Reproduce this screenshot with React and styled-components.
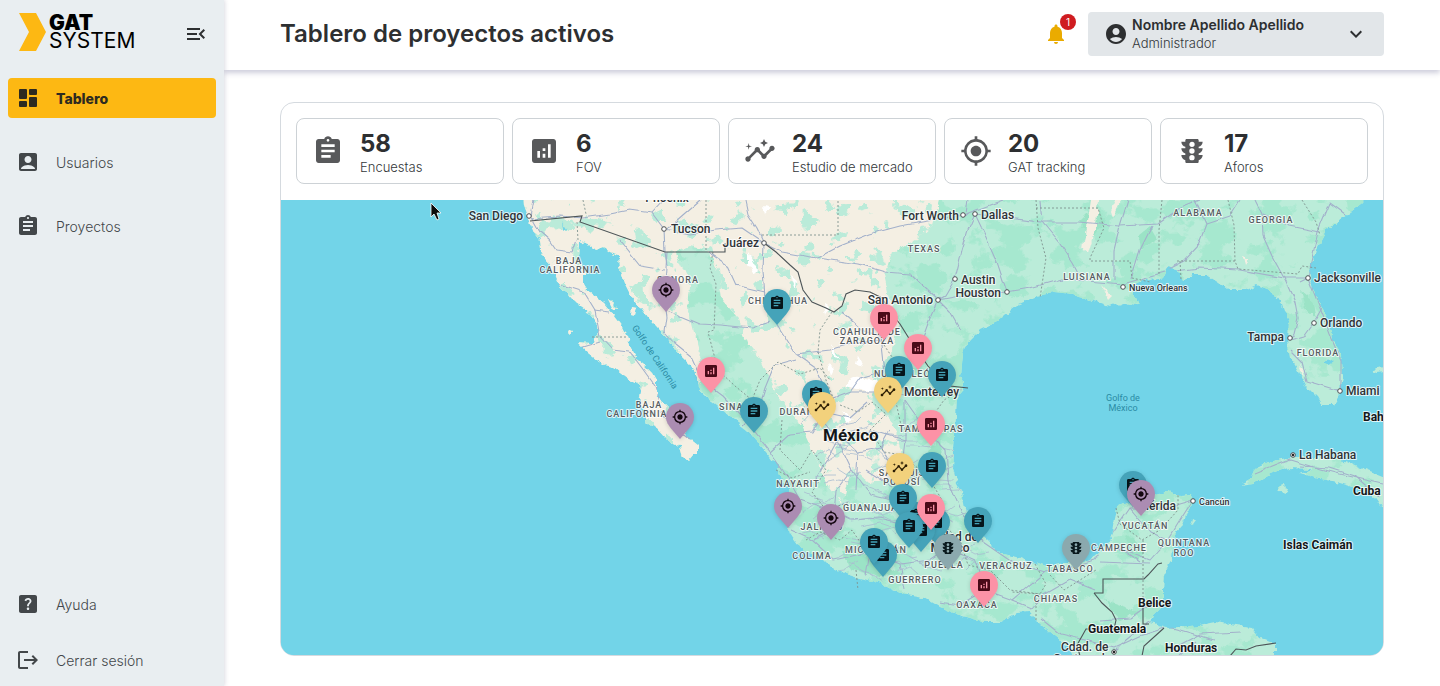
import React from 'react';
import styled, { createGlobalStyle } from 'styled-components';
import {
  MdAccountBox,
  MdAccountCircle,
  MdAnalytics,
  MdAssignment,
  MdExpandMore,
  MdHelpCenter,
  MdInsights,
  MdLogout,
  MdMenuOpen,
  MdMyLocation,
  MdNotifications,
  MdTraffic,
} from 'react-icons/md';

const DashboardIcon = () => (
  <svg viewBox='0 0 24 24' fill='currentColor' aria-hidden='true'>
    <rect x='3' y='3' width='8' height='10' rx='1' />
    <rect x='13' y='3' width='8' height='6' rx='1' />
    <rect x='3' y='15' width='8' height='6' rx='1' />
    <rect x='13' y='11' width='8' height='10' rx='1' />
  </svg>
);

const mainLinks = [
  { name: 'Tablero', icon: DashboardIcon, active: true },
  { name: 'Usuarios', icon: MdAccountBox },
  { name: 'Proyectos', icon: MdAssignment },
];

const footerLinks = [
  { name: 'Ayuda', icon: MdHelpCenter },
  { name: 'Cerrar sesión', icon: MdLogout },
];

const stats = [
  { value: 58, name: 'Encuestas', icon: MdAssignment },
  { value: 6, name: 'FOV', icon: MdAnalytics },
  { value: 24, name: 'Estudio de mercado', icon: MdInsights },
  { value: 20, name: 'GAT tracking', icon: MdMyLocation },
  { value: 17, name: 'Aforos', icon: MdTraffic },
];

const pinKinds = {
  survey: { label: 'Encuestas', color: '#45a3b9', ink: '#06141a', icon: MdAssignment },
  fov: { label: 'FOV', color: '#fc92a6', ink: '#4a0a18', icon: MdAnalytics },
  market: { label: 'Estudio de mercado', color: '#f2d17c', ink: '#2a1c04', icon: MdInsights },
  tracking: { label: 'GAT tracking', color: '#ab8cb2', ink: '#14060f', icon: MdMyLocation },
  traffic: { label: 'Aforos', color: '#8ba9ae', ink: '#0a1a1e', icon: MdTraffic },
};

// Map window, in map units
const view = { x: 281, y: 200, w: 1102, h: 455 };

const pins = [
  ['tracking', 666, 290], ['survey', 777, 303], ['fov', 884, 318], ['fov', 918, 348],
  ['survey', 899, 370], ['survey', 942, 375], ['fov', 711, 371], ['market', 888, 391],
  ['survey', 816, 394], ['market', 822, 406], ['survey', 754, 411], ['tracking', 680, 417],
  ['fov', 931, 424], ['market', 900, 467], ['survey', 932, 466], ['survey', 916, 516],
  ['survey', 903, 498], ['survey', 936, 522], ['survey', 921, 530], ['survey', 909, 526],
  ['fov', 931, 508], ['survey', 978, 521], ['traffic', 948, 548], ['survey', 883, 555],
  ['survey', 874, 542], ['fov', 984, 585], ['tracking', 788, 506], ['tracking', 831, 518],
  ['traffic', 1076, 548], ['survey', 1133, 485], ['tracking', 1141, 494],
];

const land = [
  'M523 190 L524 205 528 216 530 222 534 232 540 240 541 250 548 262 552 268 557 280 560 288 568 294 575 302 584 308 592 317 597 324 598 334 595 343 588 343 577 342 582 347 588 353 597 360 605 365 613 367 620 373 628 379 638 385 642 393 640 403 645 413 645 423 657 428 670 442 680 447 683 457 688 461 693 455 698 455 698 445 693 441 687 436 680 420 668 407 661 400 657 393 657 380 653 373 645 365 635 357 630 347 627 337 622 327 613 315 603 303 590 293 584 283 584 272 578 258 579 240 590 245 595 250 603 247 610 252 618 255 619 267 625 283 632 297 640 307 647 317 657 328 667 338 673 342 675 350 683 358 693 368 698 377 699 390 707 397 717 405 730 417 747 430 760 445 770 457 778 468 782 483 790 488 791 497 781 500 782 510 787 523 790 533 803 550 823 560 830 567 843 573 855 577 880 583 900 593 923 597 940 607 960 615 984 622 1000 622 1017 613 1030 612 1038 622 1053 635 1067 647 1072 655 1072 670 1275 670 1275 643 1260 637 1252 627 1230 624 1215 622 1200 625 1180 627 1167 628 1150 623 1153 617 1163 607 1163 590 1164 577 1167 568 1172 560 1173 547 1175 535 1182 527 1187 513 1193 500 1192 494 1180 495 1167 491 1155 494 1133 503 1117 507 1115 520 1113 533 1108 545 1095 557 1077 563 1063 563 1047 567 1033 563 1020 558 1000 553 987 540 975 530 967 513 963 493 957 483 953 470 955 433 957 400 963 387 960 377 962 353 970 340 980 330 997 322 1017 305 1037 296 1053 293 1073 295 1097 302 1110 307 1127 302 1138 305 1133 293 1133 285 1143 280 1163 277 1167 268 1177 270 1182 280 1193 275 1207 275 1218 282 1228 290 1247 290 1257 285 1270 290 1282 305 1288 323 1287 340 1290 357 1298 370 1307 387 1318 398 1322 405 1333 405 1340 393 1343 377 1342 360 1333 337 1325 313 1313 290 1310 270 1317 247 1325 232 1343 218 1362 203 1364 190Z',
  'M1240 485 L1250 480 1253 470 1267 463 1290 457 1313 457 1343 460 1360 468 1390 480 1390 510 1380 506 1370 492 1350 486 1333 481 1320 479 1300 473 1312 469 1287 468 1267 475 1253 483Z',
  'M1279 486 L1284 484 1288 488 1286 493 1280 492Z',
  'M608 299 L612 301 617 309 613 309Z',
  'M632 307 L637 308 635 316 631 315Z',
  'M571 330 L574 331 571 336 569 334Z',
  'M1193 518 L1196 519 1191 526Z',
  'M1372 370 L1385 368 1385 372 1376 373Z',
];

const dry =
  'M500 190 L942 190 932 225 916 240 892 252 884 275 890 300 900 322 893 350 878 372 872 400 894 425 902 455 893 478 868 482 852 468 842 505 826 484 812 450 798 420 776 394 762 362 748 345 738 318 722 300 718 270 706 250 690 246 676 252 690 285 688 312 694 335 700 355 705 372 690 400 712 480 500 480Z';

const roads = [
  'M534 200 L531 216 540 232 549 240 556 250 572 252 576 240',
  'M531 218 L560 216 582 218 610 214 630 210 652 213 664 200 M652 213 L664 229 665 252 667 265 M700 200 L668 228',
  'M665 229 L690 234 716 230 742 228 764 243 M745 200 L748 214 757 228 764 243 782 252 817 258 840 246 870 234 900 226 963 215 1003 200',
  'M817 258 L858 264 885 272 910 274 938 300 945 296 955 279 962 250 968 230 975 214 1040 222 1080 222 1120 226 1158 224 1180 208 1200 200',
  'M975 214 L985 235 997 262 1007 292 1030 288 1062 279 1123 284 1165 272 1200 268 1240 270 1284 278 1308 278 1300 282',
  'M938 300 L960 296 1007 292 M938 300 L930 318 922 340 902 374 905 395 M938 300 L950 312 960 330',
  'M1040 200 L1042 222 1060 244 1072 262 1080 277 M1120 226 L1114 250 1114 279 M1128 200 L1120 226 M1152 226 L1140 250 1131 279',
  'M1195 200 L1206 224 1198 245 1184 260 1168 268 M1206 224 L1230 216 1240 200 M1255 200 L1262 214 1263 236 1272 256 1284 278 1295 302 1298 318 1294 334 1290 340 1304 336 1314 322 1322 308',
  'M1345 214 L1330 203 1318 232 1312 258 1308 278 1320 308 1330 334 1341 360 1341 382 1340 391 1307 381 1302 362 1290 350',
  'M1263 214 L1290 226 1320 232 M968 200 L966 215',
  'M764 243 L763 270 765 298 772 318 778 326 796 354 816 368 824 388 834 398 850 392 880 392 905 395 940 388 963 390',
  'M664 270 L640 266 620 241 M667 252 L664 300 666 318 664 332 676 345 692 358 703 382 722 396 745 420 770 452 786 475 800 500',
  'M667 310 L700 324 720 325 752 328 770 322 M735 285 L765 292 M708 252 L726 264 736 286',
  'M770 452 L790 434 812 432 824 412 M740 428 L758 410 765 388 774 366 796 360',
  'M559 284 L584 292 595 310 600 337 612 350 630 352 642 368 655 386 660 402 M594 310 L610 312 M600 342 L580 348 M660 412 L680 432 690 440',
  'M834 398 L822 420 838 440 852 470 870 495 892 500 920 520 944 540 M838 440 L870 430 905 440 905 400 M852 470 L836 490 834 512 800 500 M834 512 L850 520 880 518 920 528',
  'M905 440 L900 480 898 510 M905 400 L926 430 946 450 948 480 962 512 980 540 1012 562 1045 572 1076 566 1095 560 1115 530 1130 508 1165 508 1193 500',
  'M790 530 L812 540 831 530 M812 540 L834 560 870 552 900 564 930 560 948 548 975 560 984 590 1012 600 1045 572 M900 564 L905 590 M870 552 L866 576',
  'M984 590 L960 605 940 602 M1012 600 L1032 608 1042 596 1070 580 1095 590 M1040 618 L1060 634 1085 640 1114 648 1140 636 1165 628 M1100 620 L1130 618 1158 598',
  'M1119 548 L1150 560 1168 540 1184 514 1193 500 M1130 508 L1150 532 1168 540 M1119 548 L1140 562 M1100 562 L1150 564',
  'M1114 652 L1126 640 1148 622 1180 630 1215 640 M1170 650 L1200 634 1240 632 M1180 655 L1195 642',
  'M1255 474 L1290 460 1310 466 1340 474 1383 484 M1300 466 L1330 468 1355 476 1380 498',
  'M845 440 L858 452 880 448 896 470 M824 412 L850 418 868 402 M858 452 L856 490 M880 448 L890 430 M866 470 L892 486',
  'M815 480 L826 462 838 440 M880 372 L860 378 850 392 M796 354 L830 350 850 344 880 340 M842 312 L862 330 880 336 884 372',
];

// Generated web of secondary roads around the central states
const localRoads = Array.from({ length: 74 }, (_, i) => {
  const x = 800 + ((i * 47) % 176);
  const y = 424 + ((i * 29) % 152);
  return `M${x} ${y} l${8 + ((i * 7) % 13)} ${((i * 11) % 19) - 9} ${5 + ((i * 5) % 11)} ${((i * 13) % 17) - 8}`;
});

const stateLines = [
  'M583 200 L586 214 M577 222 L578 240 M592 337 L627 337',
  'M706 200 L706 252 M762 235 H838 V200 M713 252 L710 268 716 284 714 330 708 332 718 370 735 386 752 400 760 380 778 362 800 374 820 368 830 380',
  'M832 312 L820 330 818 352 826 380 834 400 820 420 828 440 M884 345 L894 360 886 390 896 402 902 430 930 420 944 400 958 392',
  'M840 405 L858 412 872 402 886 414 870 430 884 452 902 455 920 470 910 490 M782 420 L780 450 800 470 812 450 826 470 812 492 826 510 850 502',
  'M776 470 L792 478 810 472 M806 540 L820 532 840 540 852 530 862 545 900 548 M856 570 L858 590 M930 480 L942 500 938 520 960 540 968 565 990 570 1010 590 1040 594',
  'M1035 564 L1046 584 1040 594 1012 592 M1050 575 L1064 590 1096 570 M1036 594 L1036 620 M1116 508 L1120 524 1142 540 1160 530 1178 510 1178 494 M1143 540 L1143 600',
  'M1036 200 L1038 228 1046 258 1040 298 M1036 208 H1098 L1104 228 1090 258 1090 261 H1130 L1132 278 1150 282',
  'M1162 200 L1159 230 1159 276 M1177 261 H1235 L1238 269 1298 274 1302 266 1316 268 M1228 200 L1234 225 1235 261 M1180 261 L1181 279 M1302 200 L1316 222 1320 235',
];

const borders = [
  'M530 221 L582 216 580 222 665 252 H725 V243',
  'M764 243 L776 252 790 265 798 272 803 290 812 302 826 308 834 312 842 306 846 294 855 290 870 292 882 298 892 314 900 324 910 340 928 366 938 378 950 386 968 388',
  'M1094 593 H1103 V579 H1144 L1148 575 1158 564 1162 563 M1094 593 L1102 603 1112 612 1116 620 1114 629 H1086 L1077 645 1080 656',
  'M1143 602 V624 H1149 M1164 628 L1144 646 1142 656 M1230 656 L1236 649 1246 650 1256 646 1276 643',
];

const seedPatches = [
  ['#9be3c6', 'M1095 205 L1106 220 1090 240 1080 220Z M1140 250 L1158 240 1150 226 1138 236Z M1300 290 L1312 300 1316 318 1306 310Z'],
  ['#9be3c6', 'M842 552 L868 556 900 574 880 576 850 568Z M940 440 L946 470 938 480 928 450Z M1105 600 L1140 612 1120 620Z M1128 536 L1144 548 1138 562 1122 550Z'],
  ['#f4efe3', 'M1090 200 L1098 200 1096 226 1088 254 1083 250 1086 226Z M1114 200 H1120 L1112 218 1110 212Z'],
  ['#f4efe3', 'M1243 256 L1249 258 1245 264Z M1299 365 L1304 370 1303 376Z M1100 284 L1112 296 1108 300Z'],
  ['#ffffff', 'M748 252 L758 270 754 274 748 264Z M764 206 L770 208 766 216Z M791 275 L797 280 796 290Z M824 305 L829 308 826 316Z M832 344 L840 360 833 356Z M852 376 L876 380 890 394 868 392 846 386Z M842 410 L854 420 848 422Z M826 362 L834 368 830 376Z M858 356 L864 366 856 364Z'],
];

const regions = [
  ['BAJA', 569, 264], ['CALIFORNIA', 570, 273], ['SONORA', 678, 283], ['CHIHUAHUA', 778, 304],
  ['COAHUILA DE', 867, 335], ['ZARAGOZA', 867, 344], ['NUEVO LEÓN', 906, 377], ['BAJA', 649, 408],
  ['CALIFORNIA', 637, 417], ['SINALOA', 741, 410], ['DURANGO', 804, 415], ['TAMAULIPAS', 931, 432],
  ['SAN LUIS', 902, 476], ['POTOSÍ', 902, 485], ['NAYARIT', 798, 487], ['JALISCO', 822, 530],
  ['GUANAJUATO', 877, 511], ['COLIMA', 812, 559], ['MICHOACÁN', 876, 553], ['GUERRERO', 915, 583],
  ['PUEBLA', 944, 568], ['VERACRUZ', 1006, 569], ['OAXACA', 977, 608], ['CHIAPAS', 1056, 602],
  ['TABASCO', 1070, 572], ['CAMPECHE', 1119, 551], ['YUCATÁN', 1145, 529], ['QUINTANA', 1184, 546],
  ['ROO', 1184, 556], ['TEXAS', 924, 252], ['LUISIANA', 1087, 280], ['ALABAMA', 1198, 216],
  ['GEORGIA', 1271, 223], ['FLORIDA', 1318, 356],
];

const cities = [
  { name: 'San Diego', x: 523, y: 220, side: 'end', dot: [529, 216] },
  { name: 'Phoenix', x: 667, y: 202, side: 'middle' },
  { name: 'Tucson', x: 671, y: 233, dot: [664, 229] },
  { name: 'Juárez', x: 759, y: 247, side: 'end', dot: [764, 243] },
  { name: 'Fort Worth', x: 959, y: 220, side: 'end', dot: [963, 215] },
  { name: 'Dallas', x: 981, y: 219, dot: [975, 214] },
  { name: 'Austin', x: 961, y: 284, dot: [955, 279] },
  { name: 'Houston', x: 1001, y: 297, side: 'end', dot: [1007, 292] },
  { name: 'San Antonio', x: 933, y: 304, side: 'end', dot: [938, 300] },
  { name: 'Jacksonville', x: 1314, y: 282, dot: [1308, 278] },
  { name: 'Nueva Orleans', x: 1129, y: 291, dot: [1123, 287], small: true },
  { name: 'Orlando', x: 1320, y: 327, dot: [1314, 323] },
  { name: 'Tampa', x: 1284, y: 341, side: 'end', dot: [1290, 338] },
  { name: 'Miami', x: 1346, y: 395, dot: [1340, 391] },
  { name: 'La Habana', x: 1299, y: 459, dot: [1293, 455], capital: true },
  { name: 'Cancún', x: 1199, y: 505, dot: [1193, 501], small: true },
  { name: 'Mérida', x: 1176, y: 510, side: 'end' },
  { name: 'Monterrey', x: 904, y: 396 },
  { name: 'Ciudad de', x: 951, y: 541, side: 'middle' },
  { name: 'México', x: 950, y: 552, side: 'middle' },
  { name: 'Cdad. de', x: 1061, y: 651, dot: [1114, 652], capital: true },
  { name: 'Guatemala', x: 1053, y: 663 },
];

const countries = [
  ['Bahamas', 1363, 421], ['Cuba', 1353, 495], ['Islas Caimán', 1283, 549], ['Belice', 1138, 607],
  ['Guatemala', 1088, 633], ['Honduras', 1165, 652],
];

const ProjectMap = () => (
  <MapCanvas>
    <svg viewBox={`${view.x} ${view.y} ${view.w} ${view.h}`} role='img' aria-label='Mapa de proyectos'>
      <defs>
        <clipPath id='land-clip'>
          {land.map((d) => <path key={d} d={d} />)}
        </clipPath>
        <clipPath id='dry-clip'>
          <path d={dry} />
        </clipPath>
        <filter id='rough' filterUnits='userSpaceOnUse' x='270' y='180' width='1130' height='500'>
          <feTurbulence type='fractalNoise' baseFrequency='0.12' numOctaves='3' seed='4' />
          <feDisplacementMap in='SourceGraphic' scale='7' xChannelSelector='R' yChannelSelector='G' />
        </filter>
        <filter id='bend' filterUnits='userSpaceOnUse' x='270' y='180' width='1130' height='500'>
          <feTurbulence type='fractalNoise' baseFrequency='0.07' numOctaves='2' seed='9' />
          <feDisplacementMap in='SourceGraphic' scale='5' xChannelSelector='R' yChannelSelector='G' />
        </filter>
        <filter id='woods' filterUnits='userSpaceOnUse' x='270' y='180' width='1130' height='500' colorInterpolationFilters='sRGB'>
          <feTurbulence type='fractalNoise' baseFrequency='0.035 0.045' numOctaves='4' seed='12' />
          <feColorMatrix values='0 0 0 0 0.65  0 0 0 0 0.91  0 0 0 0 0.81  14 0 0 0 -7.2' />
        </filter>
        <filter id='scrub' filterUnits='userSpaceOnUse' x='270' y='180' width='1130' height='500' colorInterpolationFilters='sRGB'>
          <feTurbulence type='fractalNoise' baseFrequency='0.06' numOctaves='3' seed='31' />
          <feColorMatrix values='0 0 0 0 0.73  0 0 0 0 0.92  0 0 0 0 0.85  0 26 0 0 -16.1' />
        </filter>
      </defs>
      <rect x='281' y='200' width='1102' height='455' fill='#72d4e8' />
      <g filter='url(#rough)'>
        <g clipPath='url(#land-clip)'>
          <rect x='281' y='180' width='1130' height='490' fill='#bbecd9' />
          <rect x='281' y='180' width='1130' height='490' filter='url(#woods)' />
          <path d={dry} fill='#f4efe3' />
          <g clipPath='url(#dry-clip)'>
            <rect x='281' y='180' width='700' height='490' filter='url(#scrub)' />
          </g>
          {seedPatches.map(([fill, d]) => <path key={d} d={d} fill={fill} />)}
        </g>
        <path d='M1328 358 l5 3 -3 5 -6 -3z M562 222 l5 8 -3 2z' fill='#72d4e8' />
      </g>
      <g fill='none' clipPath='url(#land-clip)'>
        <g filter='url(#bend)'>
          {localRoads.map((d) => <path key={d} d={d} stroke='#a9bcd0' strokeWidth='0.8' />)}
          {roads.map((d) => <path key={d} d={d} stroke='#a3b1cb' strokeWidth='1.1' strokeLinejoin='round' />)}
        </g>
      </g>
      <g fill='none'>
        {stateLines.map((d) => <path key={d} d={d} stroke='#7f938f' strokeWidth='0.9' strokeDasharray='2 2' />)}
        {borders.map((d) => <path key={d} d={d} stroke='#4d5558' strokeWidth='1.1' />)}
      </g>
      {regions.map(([name, x, y]) => <RegionLabel key={name + y} x={x} y={y}>{name}</RegionLabel>)}
      {cities.map(({ name, x, y, side, dot, small, capital }) => (
        <g key={name + y}>
          {dot && <circle cx={dot[0]} cy={dot[1]} r='2.3' fill='#fff' stroke='#4b4f52' strokeWidth='1' />}
          {capital && <circle cx={dot[0]} cy={dot[1]} r='1.2' fill='#222' />}
          <CityLabel x={x} y={y} $side={side} $small={small}>{name}</CityLabel>
        </g>
      ))}
      {countries.map(([name, x, y]) => <CountryLabel key={name} x={x} y={y}>{name}</CountryLabel>)}
      <CountryLabel x='823' y='441' $large>México</CountryLabel>
      <SeaLabel x='1123' y='401'>Golfo de</SeaLabel>
      <SeaLabel x='1123' y='411'>México</SeaLabel>
      <SeaLabel x='655' y='360' transform='rotate(56 655 357)'>Golfo de California</SeaLabel>
      <path
        d='M431 203 V217 L434 214 437 220 439 219 437 213 441 213Z'
        fill='#0b0b0b'
        stroke='#fff'
        strokeWidth='0.8'
      />
    </svg>
    {pins.map(([kind, x, y]) => {
      const { label, color, ink, icon: Icon } = pinKinds[kind];
      return (
        <Pin key={`${x}-${y}`} type='button' aria-label={label} $x={x} $y={y} $ink={ink}>
          <svg viewBox='0 0 28 36' aria-hidden='true'>
            <path d='M14 0C6.200 0 0 6.200 0 14c0 4.600 2.200 8 5 11.400L14 36l9-10.600c2.800-3.400 5-6.800 5-11.400C28 6.200 21.800 0 14 0z' fill={color} />
          </svg>
          <Icon />
        </Pin>
      );
    })}
  </MapCanvas>
);

const App = () => {
  return (
    <>
      <GlobalStyle />
      <Shell>
        <Sidebar>
          <Brand>
            <Logo href='#'>
              <svg viewBox='0 0 27 38' aria-hidden='true'>
                <path d='M0 0h17l10 19-10 19H0l10-19z' fill='#fdb813' />
              </svg>
              <LogoText><strong>GAT</strong>SYSTEM</LogoText>
            </Logo>
            <IconButton type='button' aria-label='Contraer menú'><MdMenuOpen /></IconButton>
          </Brand>
          <Nav>
            {mainLinks.map(({ name, icon: Icon, active }) => (
              <NavLink key={name} href='#' $active={active}><Icon />{name}</NavLink>
            ))}
          </Nav>
          <FooterNav>
            {footerLinks.map(({ name, icon: Icon }) => (
              <NavLink key={name} href='#'><Icon />{name}</NavLink>
            ))}
          </FooterNav>
        </Sidebar>
        <Page>
          <Header>
            <Title>Tablero de proyectos activos</Title>
            <BellButton type='button' aria-label='Notificaciones'>
              <MdNotifications />
              <Badge>1</Badge>
            </BellButton>
            <UserMenu type='button'>
              <MdAccountCircle />
              <UserText>
                <UserName>Nombre Apellido Apellido</UserName>
                <UserRole>Administrador</UserRole>
              </UserText>
              <MdExpandMore />
            </UserMenu>
          </Header>
          <Main>
            <Panel>
              <Stats>
                {stats.map(({ value, name, icon: Icon }) => (
                  <StatCard key={name}>
                    <Icon />
                    <StatText>
                      <StatValue>{value}</StatValue>
                      <StatName>{name}</StatName>
                    </StatText>
                  </StatCard>
                ))}
              </Stats>
              <ProjectMap />
            </Panel>
          </Main>
        </Page>
      </Shell>
    </>
  );
};

const GlobalStyle = createGlobalStyle`
  * {
    box-sizing: border-box;
  }

  body {
    margin: 0;
    background: #fff;
    color: #2d2f31;
    font-family: Inter, 'Open Sans', sans-serif;
  }

  button {
    border: 0;
    padding: 0;
    background: none;
    color: inherit;
    font: inherit;
    cursor: pointer;
  }
`;

const Shell = styled.div`
  display: flex;
  min-height: 100vh;
`;

const Sidebar = styled.aside`
  position: sticky;
  top: 0;
  z-index: 2;
  display: flex;
  flex-direction: column;
  flex: 0 0 224px;
  height: 100vh;
  padding: 0 8px 6px;
  background: #e9eef1;
  box-shadow: 1px 0 4px rgba(60, 60, 100, 0.18);
`;

const Brand = styled.div`
  display: flex;
  align-items: center;
  justify-content: space-between;
  height: 68px;
  padding: 0 8px 0 11px;
`;

const Logo = styled.a`
  display: flex;
  align-items: center;
  gap: 3px;
  padding-bottom: 4px;
  color: #000;
  text-decoration: none;

  svg {
    width: 27px;
    height: 38px;
  }
`;

const LogoText = styled.span`
  display: flex;
  flex-direction: column;
  font-size: 21px;
  line-height: 18px;

  strong {
    font-weight: 900;
  }
`;

const IconButton = styled.button`
  display: flex;

  svg {
    width: 24px;
    height: 24px;
  }
`;

const Nav = styled.nav`
  display: flex;
  flex-direction: column;
  gap: 24px;
  margin-top: 10px;
`;

const FooterNav = styled(Nav)`
  gap: 16px;
  margin-top: auto;
`;

const NavLink = styled.a`
  display: flex;
  align-items: center;
  gap: 16px;
  height: 40px;
  padding: 0 8px;
  border-radius: 4px;
  background: ${({ $active }) => ($active ? '#fdb813' : 'transparent')};
  color: ${({ $active }) => ($active ? '#2d2a20' : '#43474a')};
  font-size: 14px;
  font-weight: ${({ $active }) => ($active ? 800 : 300)};
  text-decoration: none;

  svg {
    width: 24px;
    height: 24px;
  }
`;

const Page = styled.div`
  flex: 1;
  min-width: 0;
`;

const Header = styled.header`
  display: flex;
  align-items: center;
  padding: 12px 56px 14px;
  box-shadow: 0 3px 5px rgba(80, 80, 130, 0.28);
`;

const Title = styled.h1`
  flex: 1;
  margin: 0;
  font-size: 24px;
  font-weight: 600;
  line-height: 32px;
`;

const BellButton = styled.button`
  position: relative;
  display: flex;
  margin-right: 20px;
  color: #eaab00;

  svg {
    width: 24px;
    height: 24px;
  }
`;

const Badge = styled.span`
  position: absolute;
  top: -8px;
  right: -8px;
  width: 16px;
  height: 16px;
  border-radius: 50%;
  background: #cf1c20;
  color: #fff;
  font-size: 10px;
  line-height: 16px;
  text-align: center;
`;

const UserMenu = styled.button`
  display: flex;
  align-items: center;
  gap: 4px;
  width: 296px;
  height: 44px;
  padding: 0 16px;
  border-radius: 4px;
  background: #e2e6e9;
  text-align: left;

  svg {
    width: 24px;
    height: 24px;
  }
`;

const UserText = styled.span`
  display: flex;
  flex: 1;
  flex-direction: column;
  line-height: 18px;
`;

const UserName = styled.span`
  font-size: 14px;
  font-weight: 600;
`;

const UserRole = styled.span`
  color: #33373a;
  font-size: 13px;
  font-weight: 300;
`;

const Main = styled.main`
  padding: 32px 56px 30px;
`;

const Panel = styled.section`
  overflow: hidden;
  border: 1px solid #d5dadf;
  border-radius: 14px;
`;

const Stats = styled.ul`
  display: grid;
  grid-template-columns: repeat(5, 1fr);
  gap: 8px;
  margin: 0;
  padding: 15px 15px 16px;
  list-style: none;
`;

const StatCard = styled.li`
  display: flex;
  align-items: center;
  gap: 16px;
  height: 66px;
  padding: 0 15px;
  border: 1px solid #cdd2d6;
  border-radius: 8px;

  svg {
    flex: none;
    width: 32px;
    height: 32px;
    color: #58595b;
  }
`;

const StatText = styled.div`
  padding-top: 4px;
`;

const StatValue = styled.div`
  font-size: 24px;
  font-weight: 700;
  line-height: 28px;
`;

const StatName = styled.div`
  color: #33373a;
  font-size: 13px;
  font-weight: 300;
  line-height: 18px;
  white-space: nowrap;
`;

const MapCanvas = styled.div`
  position: relative;
  overflow: hidden;
  background: #72d4e8;

  > svg {
    display: block;
    width: 100%;
    height: auto;
  }
`;

const MapText = styled.text`
  font-family: Roboto, 'Liberation Sans', sans-serif;
  paint-order: stroke;
  stroke: rgba(255, 255, 255, 0.75);
  stroke-width: 2px;
  stroke-linejoin: round;
`;

const RegionLabel = styled(MapText)`
  fill: #565c61;
  font-size: 9px;
  font-weight: 500;
  letter-spacing: 1px;
  text-anchor: middle;
`;

const CityLabel = styled(MapText)`
  fill: #2f3337;
  font-size: ${({ $small }) => ($small ? '9px' : '12px')};
  font-weight: 500;
  text-anchor: ${({ $side }) => $side || 'start'};
`;

const CountryLabel = styled(MapText)`
  fill: #14171a;
  font-size: ${({ $large }) => ($large ? '17px' : '12px')};
  font-weight: 700;
`;

const SeaLabel = styled(MapText)`
  fill: #2a8ba4;
  stroke: none;
  font-size: 9px;
  text-anchor: middle;
`;

const Pin = styled.button`
  position: absolute;
  left: ${({ $x }) => ((($x - view.x) / view.w) * 100)}%;
  top: ${({ $y }) => ((($y - view.y) / view.h) * 100)}%;
  width: 28px;
  height: 36px;
  margin: -14px 0 0 -14px;
  color: ${({ $ink }) => $ink};
  filter: drop-shadow(0 1px 2px rgba(0, 0, 0, 0.15));

  svg {
    position: absolute;
    top: 0;
    left: 0;
    width: 28px;
    height: 36px;
  }

  svg + svg {
    top: 6px;
    left: 6px;
    width: 16px;
    height: 16px;
  }
`;

export default App;
